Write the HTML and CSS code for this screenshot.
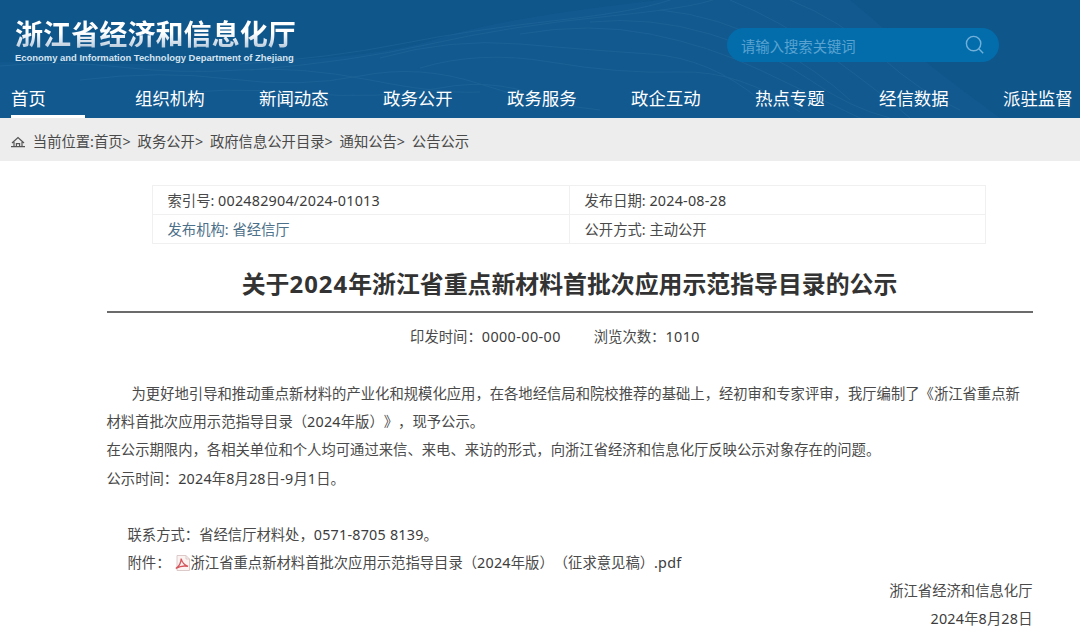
FILE: index.html
```html
<!DOCTYPE html>
<html lang="zh-CN">
<head>
    <meta charset="UTF-8">
    <meta name="viewport" content="width=device-width, initial-scale=1.0">
    <title>关于2024年浙江省重点新材料首批次应用示范指导目录的公示</title>
    <link rel="stylesheet" href="styles.css">
</head>
<body>

    <header class="header">
        <svg class="header-waves" viewBox="0 0 1080 118" aria-hidden="true">
            <path class="wave-fill" d="M0 62Q120 66 250 62T440 38T660 0H850Q920 60 1000 118H0Z"/>
            <g class="wave-lines">
                <path d="M240 64Q330 58 400 44T560 20T680 -4"/>
                <path d="M250 70Q350 62 430 44T610 16T720 -4"/>
                <path d="M0 66Q60 60 120 67T240 70T370 80T480 92"/>
                <path d="M80 80Q160 70 230 79T360 76T480 84T600 110"/>
                <path d="M160 96Q220 86 300 93T440 88T560 104"/>
                <path d="M380 58Q450 38 520 44T650 54T760 100"/>
                <path d="M420 68Q480 50 550 62T680 72T800 112"/>
                <path d="M520 34Q590 22 650 34T760 70T860 118"/>
                <path d="M590 22Q650 16 710 34T810 80T890 118"/>
                <path d="M660 10Q720 16 770 44T850 100"/>
                <path d="M730 0Q780 20 830 56T910 118"/>
                <path d="M790 0Q840 20 880 56T960 110"/>
            </g>
        </svg>
        <div class="header-top">
            <div class="logo">
                <div class="logo-cn">浙江省经济和信息化厅</div>
                <div class="logo-en">Economy and Information Technology Department of Zhejiang</div>
            </div>
            <div class="search">
                <span>请输入搜索关键词</span>
                <svg class="search-icon" viewBox="0 0 20 20">
                    <circle cx="8.6" cy="8.6" r="7.2"/>
                    <path d="M13.8 13.8L18.2 18.2"/>
                </svg>
            </div>
        </div>
        <nav class="nav">
            <a class="active">首页</a>
            <a>组织机构</a>
            <a>新闻动态</a>
            <a>政务公开</a>
            <a>政务服务</a>
            <a>政企互动</a>
            <a>热点专题</a>
            <a>经信数据</a>
            <a>派驻监督</a>
        </nav>
    </header>

    <div class="breadcrumb">
        <svg class="home-icon" viewBox="0 0 14 12">
            <path d="M1 7L7 1.6L13 7M3 6V10.4M11 6V10.4M0 10.6H14M5.4 10.4V7.6H8.6V10.4"/>
        </svg>
        <span>当前位置:首页&gt;</span>
        <span>政务公开&gt;</span>
        <span>政府信息公开目录&gt;</span>
        <span>通知公告&gt;</span>
        <span>公告公示</span>
    </div>

    <main class="content">
        <div class="info">
            <div>索引号: <span class="num">002482904/2024-01013</span></div>
            <div>发布日期: <span class="num">2024-08-28</span></div>
            <div class="org">发布机构: 省经信厅</div>
            <div>公开方式: 主动公开</div>
        </div>

        <h1 class="title">关于<span class="num">2024</span>年浙江省重点新材料首批次应用示范指导目录的公示</h1>

        <div class="meta">
            <span>印发时间：<span class="num">0000-00-00</span></span>
            <span>浏览次数：<span class="num">1010</span></span>
        </div>

        <div class="article">
            <p class="lead">为更好地引导和推动重点新材料的产业化和规模化应用，在各地经信局和院校推荐的基础上，经初审和专家评审，我厅编制了《浙江省重点新<br>材料首批次应用示范指导目录（<span class="num">2024</span>年版）》，现予公示。</p>
            <p>在公示期限内，各相关单位和个人均可通过来信、来电、来访的形式，向浙江省经济和信息化厅反映公示对象存在的问题。</p>
            <p>公示时间：<span class="num">2024</span>年<span class="num">8</span>月<span class="num">28</span>日<span class="num">-9</span>月<span class="num">1</span>日。</p>
            <p class="contact">联系方式：省经信厅材料处，<span class="num">0571-8705 8139</span>。</p>
            <p class="attach">附件：
                <svg class="pdf-icon" viewBox="0 0 16 16">
                    <path class="pdf-page" d="M2 .5H11L14.5 4V15.5H2Z"/>
                    <path class="pdf-fold" d="M11 .5V4H14.5"/>
                    <path class="pdf-mark" d="M.8 13.5Q6 10 6.2 3.5Q7.2 9 13 11.4Q7 10 .8 13.5Z"/>
                </svg><span>浙江省重点新材料首批次应用示范指导目录（<span class="num">2024</span>年版）（征求意见稿）<span class="num">.pdf</span></span></p>
            <p class="sign">浙江省经济和信息化厅</p>
            <p class="sign"><span class="num">2024</span>年<span class="num">8</span>月<span class="num">28</span>日</p>
        </div>
    </main>

</body>
</html>
```
FILE: styles.css
```css
body {
    margin: 0;
    font-family: "Noto Sans", "Noto Sans CJK SC", sans-serif;
    font-size: 14.33px;
    color: #4a4a4a;
    background-color: #fff;
    text-spacing-trim: space-all;
    overflow: hidden;
}

.num {
    letter-spacing: 0.22px;
    color: #3c3c3c;
}

.header {
    position: relative;
    height: 118px;
    background-color: #0f568b;
    color: #fff;
}

.header-waves {
    position: absolute;
    left: 0;
    top: 0;
    width: 1080px;
    height: 118px;
}

.wave-fill {
    fill: #1a659a;
    opacity: 0.25;
}

.wave-lines {
    fill: none;
    stroke: #3f83b3;
    stroke-width: 1;
    opacity: 0.2;
}

.header-top {
    position: relative;
    display: flex;
    justify-content: space-between;
    height: 80px;
    padding: 0 81px 0 15px;
}

.logo {
    padding-top: 18px;
}

.logo-cn {
    font-size: 28.1px;
    font-weight: bold;
    line-height: 33px;
    white-space: nowrap;
    background: linear-gradient(#fff 45%, #b9cbdc 90%);
    -webkit-background-clip: text;
    background-clip: text;
    color: transparent;
}

.logo-en {
    font-family: "Liberation Sans", sans-serif;
    font-size: 9.43px;
    font-weight: bold;
    line-height: 13px;
    color: #d5e4f0;
    white-space: nowrap;
}

.search {
    display: flex;
    align-items: center;
    justify-content: space-between;
    box-sizing: border-box;
    width: 272px;
    height: 34px;
    margin-top: 28px;
    padding: 0 14px;
    border-radius: 17px;
    background-color: #036dac;
    color: #5aa3d0;
}

.search-icon {
    width: 20px;
    height: 20px;
    fill: none;
    stroke: #71b0d9;
    stroke-width: 1.4;
}

.nav {
    position: relative;
    display: flex;
    gap: 50px;
    padding-left: 11px;
    overflow: hidden;
}

.nav a {
    flex: none;
    box-sizing: border-box;
    width: 74px;
    height: 38px;
    font-size: 17.4px;
    line-height: 36px;
    white-space: nowrap;
}

.nav .active {
    border-bottom: 3px solid #fff;
}

.breadcrumb {
    display: flex;
    align-items: center;
    gap: 6.8px;
    box-sizing: border-box;
    height: 43px;
    padding: 4px 11px 0;
    line-height: 39px;
    background-color: #ededed;
}

.home-icon {
    width: 14px;
    height: 12px;
    margin-right: 1px;
    fill: none;
    stroke: #555;
    stroke-width: 1.2;
}

.content {
    width: 926px;
    margin-left: 106.5px;
    padding-top: 24px;
}

.info {
    display: grid;
    grid-template-columns: 417px 416px;
    grid-template-rows: 29px 29px;
    width: 833px;
    margin-left: 45.5px;
    border-top: 1px solid #f0f0f0;
    border-left: 1px solid #f0f0f0;
}

.info div {
    box-sizing: border-box;
    padding-left: 14.5px;
    line-height: 29px;
    border-right: 1px solid #f0f0f0;
    border-bottom: 1px solid #f0f0f0;
}

.info .org {
    color: #4c7089;
}

.title {
    margin: 0;
    padding: 19px 0 7px;
    font-size: 23.88px;
    line-height: 41px;
    text-align: center;
    color: #333;
    border-bottom: 2px solid #6b6b6b;
}

.title .num {
    letter-spacing: 1px;
    color: #333;
}

.meta {
    display: flex;
    justify-content: center;
    gap: 33px;
    height: 67px;
    padding-right: 29px;
    line-height: 47px;
}

.meta .num {
    letter-spacing: 0.42px;
}

.article {
    line-height: 28.2px;
    white-space: nowrap;
}

.article p {
    margin: 0;
}

.article .lead {
    text-indent: 25px;
}

.article .contact {
    margin-top: 28px;
    padding-left: 21px;
}

.article .attach {
    display: flex;
    align-items: center;
    padding-left: 21px;
}

.pdf-icon {
    width: 16px;
    height: 16px;
    margin-left: 4px;
}

.pdf-page {
    fill: #fbf3f2;
    stroke: #dccaca;
}

.pdf-fold {
    fill: none;
    stroke: #dccaca;
}

.pdf-mark {
    fill: none;
    stroke: #d4565c;
    stroke-width: 1.3;
}

.article .sign {
    text-align: right;
}
```
